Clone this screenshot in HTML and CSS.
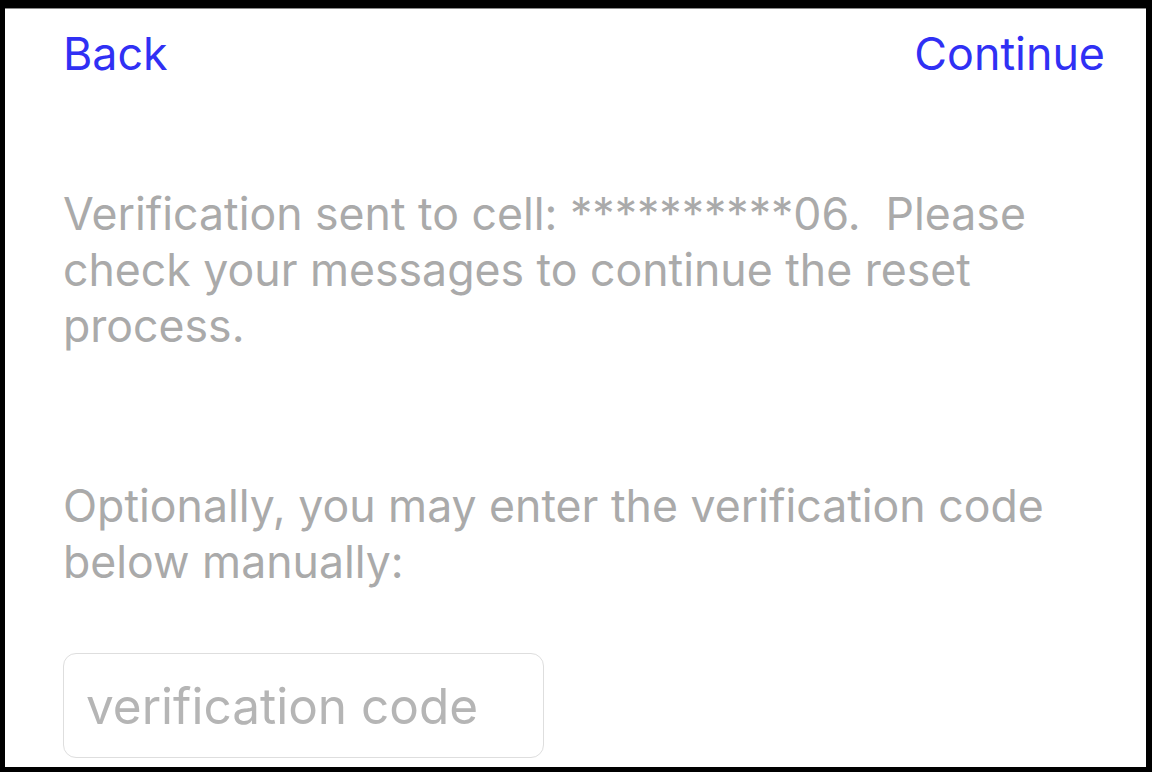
FILE: index.html
```html
<!DOCTYPE html>
<html lang="en">
<head>
<meta charset="utf-8">
<title>Verification</title>
<link rel="stylesheet" href="styles.css">
</head>
<body>
<div class="screen">
  <header class="nav">
    <a class="nav-link" href="#">Back</a>
    <a class="nav-link" href="#">Continue</a>
  </header>
  <main class="content">
    <p class="message">Verification sent to cell: **********06.&nbsp; Please check your messages to continue the reset process.</p>
    <p class="message second">Optionally, you may enter the verification code below manually:</p>
    <input class="code-input" type="text" placeholder="verification code">
  </main>
</div>
</body>
</html>
```

FILE: styles.css
```css
html, body {
  margin: 0;
  padding: 0;
  background: #000;
  height: 100%;
}
body {
  padding: 8px 6px 5px 5px;
  box-sizing: border-box;
  font-family: "Inter", "Noto Sans", sans-serif;
}
.screen {
  background: #fff;
  height: 100%;
  border-top: 1px solid #8a8a8a;
  box-sizing: border-box;
  overflow: hidden;
  padding: 0 41px 0 58px;
}
.nav {
  display: flex;
  justify-content: space-between;
  align-items: baseline;
  padding-top: 17px;
}
.nav-link {
  color: #3030f4;
  text-decoration: none;
  font-size: 44.8px;
  line-height: 56px;
}
.content {
  padding-top: 104px;
}
.message {
  margin: 0;
  color: #aaaaaa;
  font-size: 44.6px;
  line-height: 56px;
}
.second {
  margin-top: 124px;
}
.code-input {
  display: block;
  margin-top: 63px;
  width: 481px;
  height: 105px;
  box-sizing: border-box;
  border: 1px solid #dedede;
  border-radius: 13px;
  padding: 0 22px;
  font-family: inherit;
  font-size: 49.5px;
  color: #333;
  outline: none;
}
.code-input::placeholder {
  color: #b5b5b5;
}
```
